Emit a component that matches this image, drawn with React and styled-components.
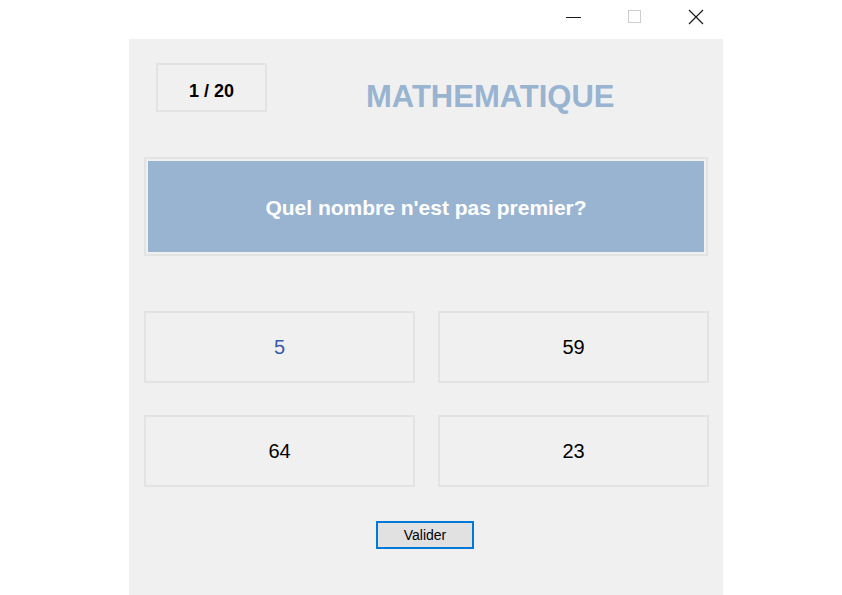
import styled, { createGlobalStyle } from "styled-components";

const GlobalStyle = createGlobalStyle`
  html, body {
    margin: 0;
    padding: 0;
    background: #ffffff;
    font-family: "Liberation Sans", Arial, sans-serif;
  }
`;

const answers = [
  { label: "5", active: true },
  { label: "59" },
  { label: "64" },
  { label: "23" },
];

export default function App() {
  return (
    <>
      <GlobalStyle />
      <Window>
        <TitleBar>
          <Control aria-label="minimize">
            <svg width="16" height="16" viewBox="0 0 16 16">
              <line x1="0" y1="8.5" x2="15" y2="8.5" stroke="#1a1a1a" strokeWidth="1" />
            </svg>
          </Control>
          <Control aria-label="maximize">
            <svg width="16" height="16" viewBox="0 0 16 16">
              <rect x="1.5" y="1.5" width="12" height="12" fill="none" stroke="#cccccc" strokeWidth="1" />
            </svg>
          </Control>
          <Control aria-label="close">
            <svg width="16" height="16" viewBox="0 0 16 16">
              <path d="M1 1 L15 15 M15 1 L1 15" stroke="#1a1a1a" strokeWidth="1.2" fill="none" />
            </svg>
          </Control>
        </TitleBar>
        <Panel>
          <Header>
            <Counter>1 / 20</Counter>
            <Title>MATHEMATIQUE</Title>
          </Header>
          <QuestionFrame>
            <Question>Quel nombre n'est pas premier?</Question>
          </QuestionFrame>
          <Answers>
            {answers.map((a) => (
              <Answer key={a.label} $active={a.active}>
                {a.label}
              </Answer>
            ))}
          </Answers>
          <Footer>
            <ValidateButton>Valider</ValidateButton>
          </Footer>
        </Panel>
      </Window>
    </>
  );
}

const Window = styled.div`
  width: 842px;
  height: 595px;
  display: flex;
  flex-direction: column;
  overflow: hidden;
`;

const TitleBar = styled.div`
  height: 39px;
  display: flex;
  align-items: flex-start;
  padding-left: 543px;
  box-sizing: border-box;
`;

const Control = styled.div`
  width: 61px;
  height: 34px;
  display: flex;
  align-items: center;
  justify-content: center;
  svg {
    display: block;
  }
`;

const Panel = styled.div`
  margin-left: 129px;
  width: 594px;
  flex: 1;
  background: #f0f0f0;
  padding: 24px 0 0 15px;
  box-sizing: border-box;
  display: flex;
  flex-direction: column;
`;

const Header = styled.div`
  display: flex;
  align-items: flex-start;
  padding-left: 12px;
`;

const Counter = styled.div`
  width: 111px;
  height: 49px;
  box-sizing: border-box;
  border: 2px solid #e3e3e3;
  padding-top: 8px;
  display: flex;
  align-items: center;
  justify-content: center;
  font-size: 18px;
  font-weight: bold;
  color: #000;
`;

const Title = styled.div`
  margin-left: 99px;
  margin-top: 18px;
  font-size: 31px;
  line-height: 31px;
  font-weight: bold;
  color: #99b4d1;
`;

const QuestionFrame = styled.div`
  margin-top: 45px;
  width: 564px;
  height: 99px;
  box-sizing: border-box;
  border: 2px solid #e3e3e3;
  padding: 2px;
`;

const Question = styled.div`
  width: 100%;
  height: 100%;
  background: #99b4d1;
  display: flex;
  align-items: center;
  justify-content: center;
  color: #ffffff;
  font-size: 21px;
  font-weight: bold;
  padding-top: 2px;
  box-sizing: border-box;
`;

const Answers = styled.div`
  margin-top: 55px;
  display: grid;
  grid-template-columns: 271px 271px;
  grid-auto-rows: 72px;
  column-gap: 23px;
  row-gap: 32px;
`;

const Answer = styled.div`
  box-sizing: border-box;
  border: 2px solid #e3e3e3;
  display: flex;
  align-items: center;
  justify-content: center;
  font-size: 20px;
  color: ${(p) => (p.$active ? "#3a5ca8" : "#000000")};
`;

const Footer = styled.div`
  margin-top: 34px;
  padding-left: 232px;
`;

const ValidateButton = styled.button`
  width: 98px;
  height: 28px;
  box-sizing: border-box;
  border: 2px solid #0078d7;
  background: #e1e1e1;
  font-family: "Liberation Sans", Arial, sans-serif;
  font-size: 14px;
  color: #000;
  padding: 0;
  margin: 0;
  display: flex;
  align-items: center;
  justify-content: center;
`;
